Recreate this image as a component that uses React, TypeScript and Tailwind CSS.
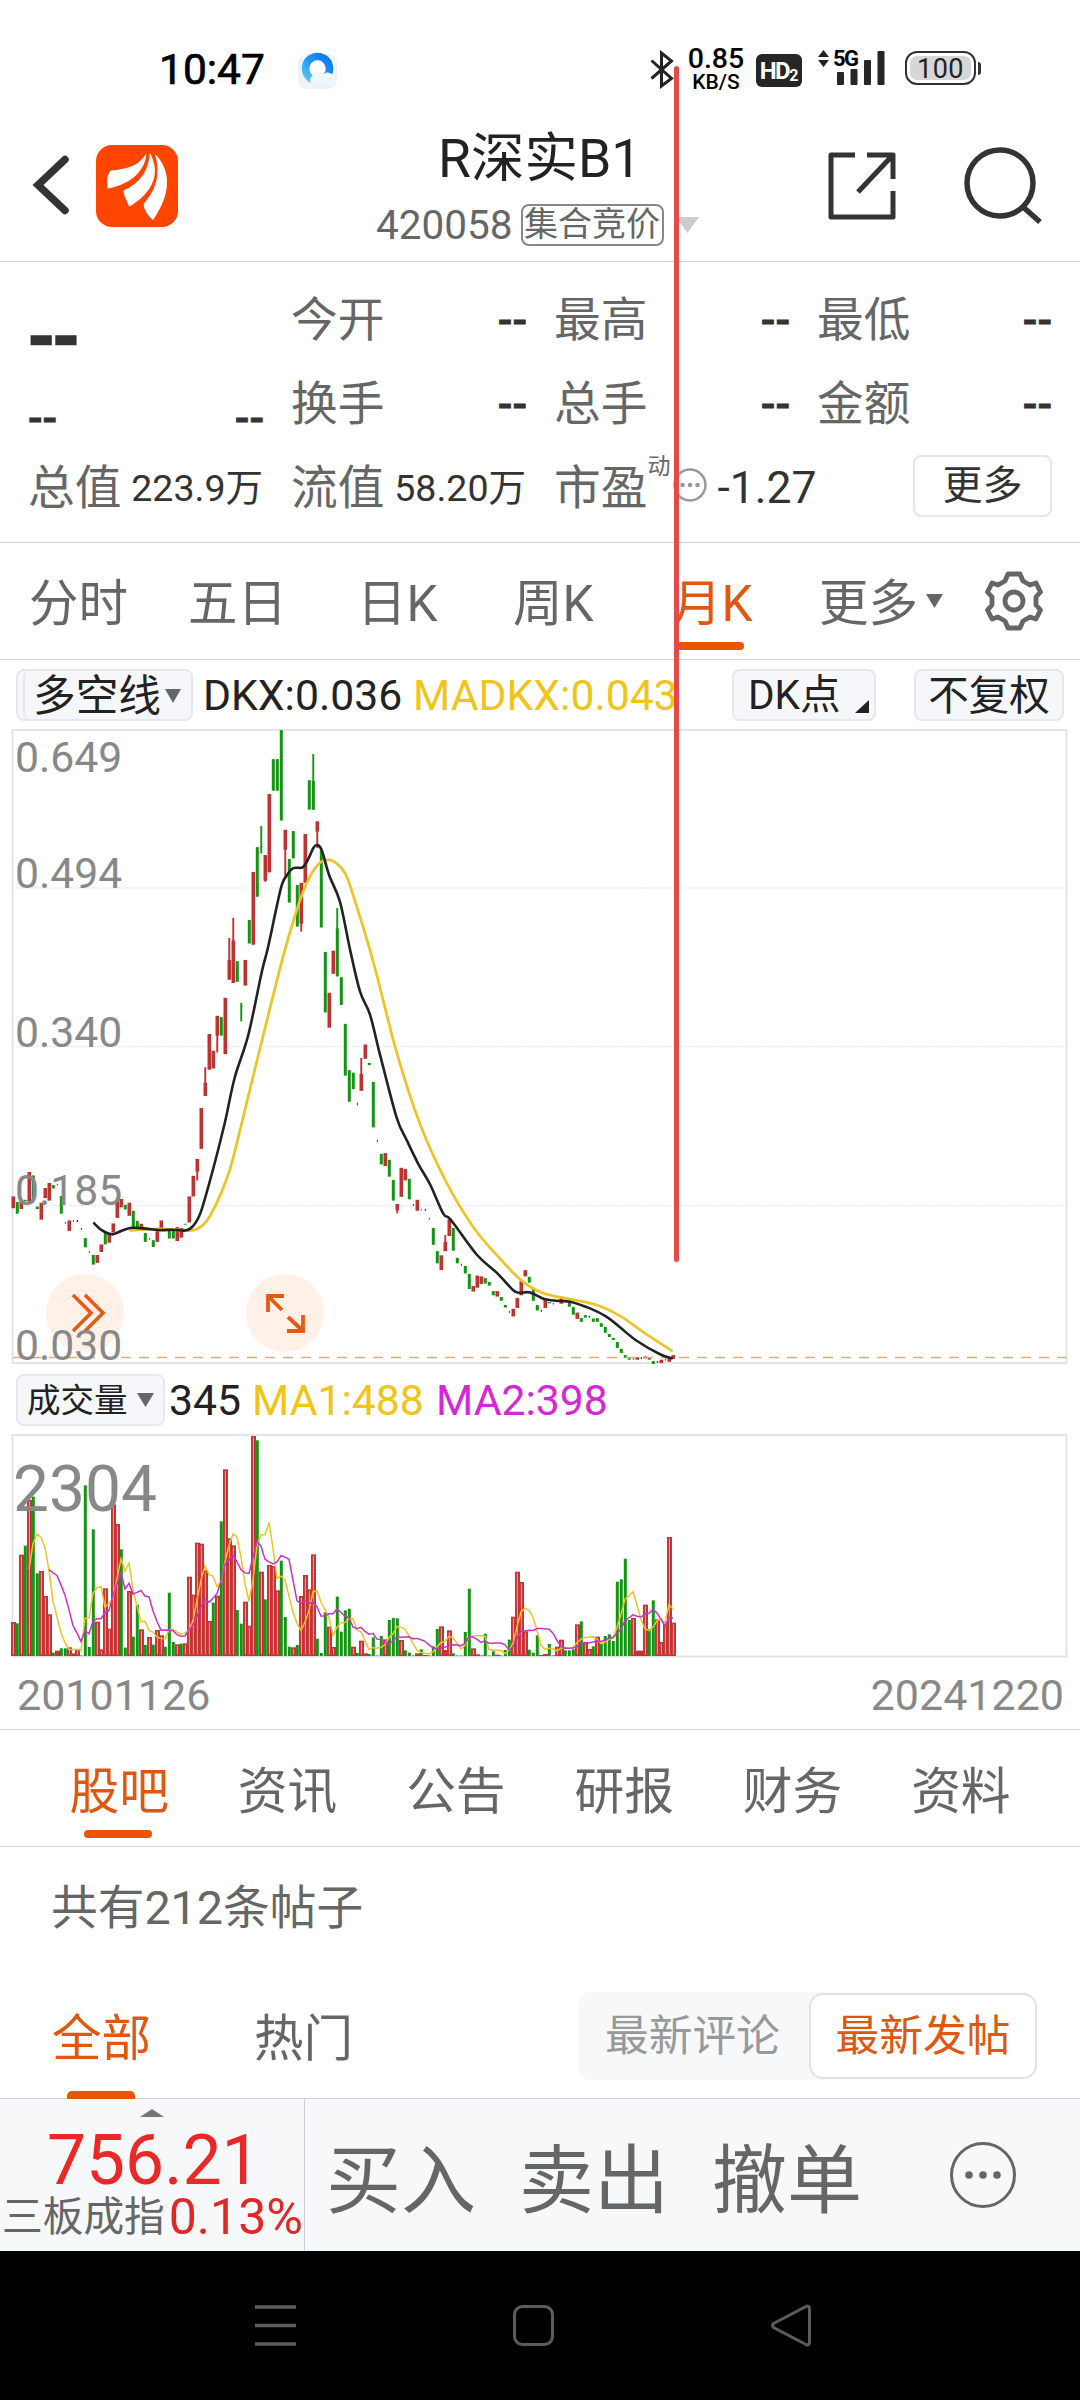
import React from "react";

type Candle = [string, number, number, number?, number?];

// Candles: colour, high, low and, where a wick is visible, body top and bottom.
const CANDLES: Candle[] = [
  ["r", 1132, 1160], ["g", 1145, 1173], ["r", 1140, 1162], ["g", 1140, 1143], ["r", 1074, 1145],
  ["g", 1082, 1140], ["g", 1156, 1162], ["r", 1147, 1187], ["r", 1112, 1136], ["r", 1100, 1142],
  ["g", 1105, 1113], ["tr", 1102, 1106], ["g", 1131, 1173], ["tg", 1193, 1197], ["r", 1189, 1214],
  ["tr", 1188, 1192], ["k", 1188, 1193], ["tg", 1207, 1212], ["g", 1231, 1253], ["tg", 1262, 1266],
  ["g", 1271, 1294], ["r", 1271, 1290], ["r", 1246, 1264], ["g", 1219, 1246], ["r", 1222, 1242],
  ["r", 1196, 1218], ["r", 1142, 1183], ["r", 1138, 1158], ["g", 1152, 1163], ["r", 1147, 1178],
  ["g", 1166, 1205], ["g", 1190, 1210], ["r", 1197, 1210], ["g", 1219, 1240], ["tr", 1231, 1235],
  ["g", 1236, 1252], ["r", 1215, 1240], ["r", 1189, 1208], ["g", 1211, 1214], ["g", 1213, 1232],
  ["g", 1213, 1232], ["r", 1205, 1238], ["r", 1207, 1230], ["g", 1197, 1199], ["r", 1132, 1194],
  ["r", 1083, 1132], ["r", 1043, 1094, 1043, 1073], ["r", 922, 1019], ["r", 825, 893, 862, 893], ["r", 746, 831],
  ["r", 786, 828], ["r", 703, 790, 703, 750], ["g", 706, 750], ["r", 660, 794], ["r", 518, 617, 570, 617],
  ["r", 470, 625, 524, 625], ["g", 573, 622], ["g", 672, 716, 680, 681], ["r", 570, 631], ["g", 475, 531],
  ["r", 361, 534], ["g", 302, 420], ["g", 252, 317, 300, 301], ["r", 321, 384, 321, 382], ["r", 176, 362],
  ["g", 93, 168], ["g", 93, 168], ["g", 24, 239], ["r", 261, 373, 261, 308], ["g", 330, 434],
  ["g", 264, 329], ["g", 392, 491], ["r", 387, 503, 387, 484], ["r", 271, 387], ["g", 143, 213],
  ["g", 81, 213, 145, 213], ["r", 241, 304, 241, 265], ["g", 310, 493], ["g", 551, 695], ["r", 648, 731],
  ["r", 548, 603], ["g", 447, 609, 495, 609], ["g", 611, 677], ["g", 722, 845], ["g", 832, 907],
  ["g", 838, 877], ["tg", 909, 916], ["r", 803, 881, 841, 881], ["r", 771, 805], ["g", 815, 820],
  ["g", 860, 968], ["tg", 997, 1003], ["g", 1031, 1056], ["r", 1029, 1060], ["g", 1045, 1085],
  ["g", 1093, 1142], ["r", 1150, 1172, 1150, 1165], ["r", 1064, 1133], ["r", 1067, 1094], ["g", 1090, 1139],
  ["tg", 1150, 1155], ["r", 1140, 1166], ["tg", 1162, 1165], ["k", 1162, 1166], ["tg", 1183, 1187],
  ["g", 1207, 1247], ["g", 1262, 1291], ["r", 1272, 1307], ["r", 1224, 1262, 1240, 1262], ["r", 1186, 1226],
  ["g", 1207, 1261], ["g", 1278, 1291], ["tg", 1292, 1297], ["g", 1297, 1315], ["g", 1316, 1352],
  ["r", 1345, 1358], ["r", 1320, 1349], ["r", 1322, 1340], ["g", 1326, 1339], ["g", 1335, 1344],
  ["g", 1357, 1367], ["r", 1357, 1370], ["g", 1371, 1380], ["g", 1390, 1396], ["tg", 1404, 1409],
  ["r", 1399, 1417], ["r", 1373, 1397], ["r", 1332, 1367], ["r", 1307, 1322], ["g", 1323, 1337],
  ["g", 1352, 1380], ["g", 1390, 1403], ["k", 1402, 1406], ["r", 1378, 1397], ["g", 1383, 1386],
  ["tg", 1385, 1389], ["r", 1380, 1383], ["r", 1370, 1387], ["r", 1378, 1384], ["g", 1380, 1394],
  ["g", 1395, 1413], ["r", 1408, 1423], ["g", 1421, 1430], ["g", 1414, 1420], ["k", 1416, 1420],
  ["g", 1422, 1430], ["g", 1421, 1430], ["g", 1433, 1442], ["g", 1442, 1456], ["g", 1459, 1466],
  ["g", 1468, 1473], ["g", 1478, 1492], ["g", 1494, 1504], ["g", 1509, 1516], ["g", 1516, 1520],
  ["tr", 1516, 1520], ["r", 1514, 1520], ["k", 1514, 1518], ["r", 1512, 1517], ["g", 1515, 1520],
  ["g", 1523, 1530], ["k", 1523, 1527], ["r", 1520, 1528], ["tr", 1518, 1522], ["r", 1518, 1525],
  ["r", 1509, 1518],
];

const DKX: [number, number][] = [
  [280, 1194], [305, 1212], [335, 1222], [355, 1217], [390, 1207], [430, 1208], [480, 1212], [520, 1211],
  [556, 1213], [578, 1203], [602, 1170], [640, 1065], [675, 955], [704, 850], [745, 748], [785, 600],
  [805, 537], [842, 402], [860, 370], [880, 352], [908, 350], [925, 330], [940, 304], [951, 297], [965, 309], [988, 370],
  [1020, 432], [1050, 545], [1080, 645], [1110, 700], [1140, 795], [1190, 945], [1220, 998], [1255, 1055],
  [1290, 1103], [1330, 1173], [1353, 1188], [1430, 1270], [1490, 1313], [1540, 1355], [1560, 1361], [1590, 1360],
  [1630, 1375], [1670, 1380], [1710, 1382], [1770, 1398], [1820, 1418], [1860, 1443], [1910, 1475],
  [1980, 1507], [2018, 1517],
];

const MADKX: [number, number][] = [
  [388, 1213], [480, 1209], [560, 1213], [590, 1210], [620, 1190], [650, 1148], [680, 1090], [705, 1023],
  [780, 780], [850, 560], [890, 452], [920, 388], [950, 347], [980, 332], [1010, 341], [1037, 367],
  [1065, 430], [1120, 575], [1190, 790], [1260, 960], [1340, 1100], [1420, 1205], [1500, 1280],
  [1565, 1332], [1630, 1362], [1710, 1376], [1790, 1390], [1860, 1416], [1940, 1460], [2018, 1500],
];

const VOLUMES: [string, number][] = (
  "r102 g98 r304 g331 r468 g478 g248 r255 r180 r125 g10 r16 g23 g23 r26 r8 r21 g0 g512 g27 g380 r103 r20 r203 r82 " +
  "r455 r396 g320 g25 r195 g58 g154 r80 g33 r57 g34 r78 r62 g28 g190 g42 r35 g37 r38 r238 r184 r340 r337 r257 r105 " +
  "g160 r181 g404 r560 r353 r332 g138 g97 r163 r91 r660 g647 r253 g170 r273 r270 r197 g286 g117 g28 r26 g33 r180 r243 r200 " +
  "r305 g52 g9 g131 r88 r27 g178 g73 g137 g142 r28 g9 r46 r8 g6 g56 g0 g60 r50 g108 g114 g113 r48 g17 g10 " +
  "g0 r8 g20 r3 g1 g29 g81 r89 r18 r77 g8 g1 g1 g72 g202 r23 r5 r1 g67 g0 g14 r4 g0 g18 g49 " +
  "r118 r253 r222 r74 g19 g10 g62 r3 r6 g36 g2 r28 r49 g17 g17 g20 r95 g104 r40 r21 g29 r58 g38 g60 g65 " +
  "g45 g223 g230 g292 g108 r114 r16 r16 r154 g81 g167 r110 r42 r95 r357 r100"
)
  .split(" ")
  .map((v) => [v[0], Number(v.slice(1))]);

const RED = "#bf3232";
const GREEN = "#159315";

const barX = (i: number) => 13.3 + 4 * i;
const priceY = (v: number) => v / 2.376 - 9;

function smooth(points: [number, number][]) {
  const p = points.map(([x, y]) => [x / 3, priceY(y)]);
  let d = `M${p[0][0]} ${p[0][1]}`;
  for (let i = 0; i < p.length - 1; i++) {
    const a = p[Math.max(i - 1, 0)];
    const b = p[i];
    const c = p[i + 1];
    const e = p[Math.min(i + 2, p.length - 1)];
    d += `C${b[0] + (c[0] - a[0]) / 6} ${b[1] + (c[1] - a[1]) / 6} ${c[0] - (e[0] - b[0]) / 6} ${c[1] - (e[1] - b[1]) / 6} ${c[0]} ${c[1]}`;
  }
  return d;
}

function average(n: number) {
  const out: string[] = [];
  for (let i = n - 1; i < VOLUMES.length; i++) {
    let sum = 0;
    for (let k = i - n + 1; k <= i; k++) sum += VOLUMES[k][1];
    out.push(`${barX(i) - 0.3},${222 - sum / n / 3}`);
  }
  return out.join(" ");
}

function Triangle({ className, up }: { className: string; up?: boolean }) {
  return (
    <svg className={className} viewBox="0 0 10 10" preserveAspectRatio="none" fill="currentColor">
      <path d={up ? "M5 0L10 10H0Z" : "M0 0H10L5 10Z"} />
    </svg>
  );
}

function StatusBar() {
  return (
    <div className="flex h-[112px] shrink-0 items-start text-black">
      <div className="ml-[159px] mt-[44px] w-[139px] text-[42.500px] leading-[52px] [-webkit-text-stroke:0.7px_black]">10:47</div>
      <svg className="mt-[50px] h-[40px] w-[40px]" viewBox="0 0 40 40">
        <defs>
          <linearGradient id="ring" x1="0" y1="1" x2="1" y2="0">
            <stop offset="0" stopColor="#5cc8ff" />
            <stop offset=".5" stopColor="#1e96f5" />
            <stop offset="1" stopColor="#0a78f0" />
          </linearGradient>
        </defs>
        <rect x="0" y="4" width="39" height="35" rx="9" fill="#eef3fa" />
        <circle cx="19.500" cy="18.500" r="12" fill="#fff" stroke="url(#ring)" strokeWidth="7.500" />
        <path d="M14 35a7 7 0 0 1 2-11a7 7 0 0 1 10 0a6 6 0 0 1 8 10z" fill="#f1f5fc" />
      </svg>
      <svg className="ml-[312px] mt-[50px] h-[39px] w-[24px]" viewBox="0 0 24 39" fill="none" stroke="#222" strokeWidth="3">
        <path d="M1.500 10.500L21.500 28.500L11.500 36V3L21.500 11L1.500 28.500" />
      </svg>
      <div className="ml-[11px] mt-[46px] w-[62px] text-center font-medium">
        <div className="h-[26px] text-[28.500px] leading-[26px]">0.85</div>
        <div className="h-[20px] text-[21px] leading-[20px]">KB/S</div>
      </div>
      <div className="ml-[9px] mt-[54px] flex h-[33px] w-[46px] items-end justify-center rounded-[6px] bg-[#262626] font-bold text-white">
        <span className="text-[24px] leading-[32px] tracking-[-1.5px]">HD</span>
        <span className="text-[16px] leading-[22px]">2</span>
      </div>
      <svg className="ml-[16px] mt-[50px] h-[17px] w-[11px]" viewBox="0 0 11 17" fill="#222">
        <path d="M5.500 0L11 7H0ZM5.500 17L0 10H11Z" />
      </svg>
      <div className="relative ml-[3px] mt-[51px] h-[35px] w-[53px]">
        <svg className="h-[35px] w-[53px]" viewBox="0 0 53 35" fill="#262626">
          <rect x="5" y="21" width="7" height="13" rx="1" />
          <rect x="18.500" y="18" width="7" height="16" rx="1" />
          <rect x="32" y="9" width="7" height="25" rx="1" />
          <rect x="45.500" y="0" width="7" height="34" rx="1" />
        </svg>
        <span className="absolute left-[1px] top-[-3px] text-[22px] font-bold leading-[22px] tracking-[-1.5px]">5G</span>
      </div>
      <div className="ml-[20px] mt-[51px] flex h-[34px] w-[71px] rounded-[12px] border-2 border-[#333] bg-white p-[3px]">
        <div className="flex-1 rounded-[7px] bg-[#d6d6d6] text-center text-[27px] leading-[26px] tracking-[0.5px] text-[#222]">100</div>
      </div>
      <div className="ml-[2px] mt-[62px] h-[13px] w-[3px] rounded-r bg-[#333]" />
    </div>
  );
}

function Header() {
  return (
    <div className="flex h-[150px] shrink-0 border-b border-[#d0d0d0]">
      <svg className="ml-[31px] mt-[40px] h-[66px] w-[40px]" viewBox="0 0 40 66" fill="none" stroke="#333" strokeWidth="7.500" strokeLinecap="round">
        <path d="M34 7.500L7 33L34 58.500" />
      </svg>
      <svg className="ml-[25px] mt-[33px] h-[82px] w-[82px]" viewBox="288 74 246 246">
        <rect x="288" y="74" width="246" height="246" rx="48" fill="#ff4500" />
        <path d="M323 205C320 182 322 162 331 151C380 147 418 137 439 99C437 150 394 192 323 205Z" fill="#fff" />
        <path d="M388 259C380 240 370 224 371 210C420 188 447 152 449 97C482 154 464 213 388 259Z" fill="#fff" />
        <path d="M459 299C442 284 431 267 431 250C468 210 484 158 464 100C514 148 515 220 459 299Z" fill="#fff" />
      </svg>
      <div className="ml-[198px] flex w-[325px] flex-col">
        <div className="mt-[15px] h-[64px] pl-[62px] text-[53.500px] leading-[64px] text-[#222]">R深实B1</div>
        <div className="mt-[10px] flex h-[48px] items-center text-[#666]">
          <span className="text-[40.500px] leading-[46px]">420058</span>
          <span className="ml-[8px] h-[42px] w-[143px] rounded-[8px] border-2 border-[#888] text-center text-[34px] leading-[37px]">集合竞价</span>
          <Triangle className="ml-[12px] h-[16px] w-[23px] text-[#ccc]" />
        </div>
      </div>
      <svg className="ml-[125px] mt-[37px] h-[74px] w-[72px]" viewBox="0 0 72 74" fill="none" stroke="#333" strokeWidth="5" strokeLinejoin="round">
        <path d="M29 6H5V68H67V42M41 6H67V30M32 43L66 7" />
      </svg>
      <svg className="ml-[65px] mt-[33px] h-[82px] w-[82px]" viewBox="0 0 82 82" fill="none" stroke="#333" strokeWidth="5.500">
        <circle cx="37" cy="38" r="33" />
        <path d="M59 61L77 77" />
      </svg>
    </div>
  );
}

function Quote({ label, value, small }: { label: string; value: string; small?: boolean }) {
  return (
    <div className={small ? "flex h-[84px] items-center justify-between pr-[28px]" : "flex h-[84px] items-center justify-between pr-[27px]"}>
      <span className="text-[46.700px] text-[#666]">{label}</span>
      <span className={small ? "text-[37.500px] text-[#333]" : "text-[43px] font-medium text-[#333] [-webkit-text-stroke:0.8px_#333]"}>{value}</span>
    </div>
  );
}

function QuotePanel() {
  return (
    <div className="h-[281px] shrink-0 border-b border-[#d0d0d0] pl-[28px] pt-[16px] leading-[60px]">
      <div className="grid grid-cols-[263px_263px_263px_262px]">
        <div className="h-[84px] pt-[30px] text-[68px] font-bold leading-[60px] tracking-[-2px] text-[#333] [-webkit-text-stroke:2.5px_#333]">--</div>
        <Quote label="今开" value="--" />
        <Quote label="最高" value="--" />
        <Quote label="最低" value="--" />
        <div className="flex h-[84px] items-center justify-between pr-[27px] pt-[27px] text-[43px] font-medium text-[#333] [-webkit-text-stroke:0.8px_#333]">
          <span>--</span>
          <span>--</span>
        </div>
        <Quote label="换手" value="--" />
        <Quote label="总手" value="--" />
        <Quote label="金额" value="--" />
        <Quote label="总值" value="223.9万" small />
        <Quote label="流值" value="58.20万" small />
        <div className="flex h-[84px] items-center">
          <span className="text-[46.700px] text-[#666]">市盈</span>
          <span className="mb-[43px] text-[23px] leading-[30px] text-[#666]">动</span>
          <svg className="-mt-[6px] ml-[3px] h-[34px] w-[34px] shrink-0" viewBox="0 0 34 34">
            <circle cx="17" cy="17" r="15.500" fill="none" stroke="#999" strokeWidth="2.500" />
            <g fill="#999">
              <circle cx="9.500" cy="17" r="2.300" />
              <circle cx="17" cy="17" r="2.300" />
              <circle cx="24.500" cy="17" r="2.300" />
            </g>
          </svg>
          <span className="ml-[10px] whitespace-nowrap text-[44.500px] text-[#333]">-1.27</span>
        </div>
        <div className="flex h-[84px] items-center justify-end pr-[27px]">
          <div className="-mt-[4px] h-[62px] w-[139px] rounded-[8px] border-2 border-[#e6e6e6] text-center text-[40px] leading-[58px] text-[#333]">更多</div>
        </div>
      </div>
    </div>
  );
}

function PeriodTabs() {
  return (
    <div className="flex h-[117px] shrink-0 border-b border-[#d0d0d0] pl-[29px] text-[49.500px] leading-[123px] text-[#666]">
      <div className="w-[159px]">分时</div>
      <div className="w-[169px]">五日</div>
      <div className="w-[156px]">日K</div>
      <div className="w-[160px]">周K</div>
      <div className="relative w-[146px] text-[#e0570f]">
        <span className="-ml-[1px]">月K</span>
        <div className="absolute left-[3px] top-[99px] h-[8px] w-[68px] rounded-full bg-[#e95504]" />
      </div>
      <div className="w-[107px] whitespace-nowrap">更多</div>
      <Triangle className="mt-[51px] h-[14px] w-[17px]" />
      <svg className="ml-[40px] mt-[27px] h-[62px] w-[62px]" viewBox="-31 -31 62 62" fill="none" stroke="#666" strokeWidth="4.800" strokeLinejoin="round">
        <path d="M-6 -27H6L9 -20L16 -16L22 -18L26.500 -9L22 -4V4L26.500 9L22 18L16 16L9 20L6 27H-6L-9 20L-16 16L-22 18L-26.500 9L-22 4V-4L-26.500 -9L-22 -18L-16 -16L-9 -20Z" />
        <circle r="9" />
      </svg>
    </div>
  );
}

function IndicatorBar() {
  return (
    <div className="flex h-[69px] shrink-0 items-start pt-[9px] text-[42.700px] leading-[53px] text-[#222]">
      <div className="ml-[16px] h-[52px] w-[177px] rounded-[8px] border-2 border-[#e6e8ec] bg-[#f6f7fa]">
        <div className="-mt-[1px] ml-[5px] flex h-[50px] items-center rounded-[7px] border-l-2 border-[#e6e8ec] pl-[8px] pt-[3px]">
          多空线
          <Triangle className="-mt-[2px] ml-[4px] h-[14px] w-[16px] text-[#666]" />
        </div>
      </div>
      <div className="ml-[10px] w-[210px]">DKX:0.036</div>
      <div className="w-[262px] text-[#f0c419]">MADKX:0.043</div>
      <div className="relative ml-[57px] h-[52px] w-[144px] rounded-[8px] border-2 border-[#e6e8ec] bg-[#f6f7fa] pl-[14px] text-[40.500px] leading-[49px]">
        DK点
        <svg className="absolute bottom-[6px] right-[5px] h-[13px] w-[14px]" viewBox="0 0 14 13" fill="#222">
          <path d="M14 0V13H0Z" />
        </svg>
      </div>
      <div className="ml-[38px] h-[52px] w-[150px] rounded-[8px] border-2 border-[#e6e8ec] bg-[#f6f7fa] text-center text-[40.500px] leading-[50px]">不复权</div>
    </div>
  );
}

function PriceChart() {
  return (
    <div className="relative h-[635px] shrink-0">
      <svg className="block h-[635px] w-[1080px]" viewBox="0 0 1080 635" fill="none">
        <rect x="12.500" y="1" width="1054" height="633" stroke="#e0e0e0" strokeWidth="1.700" />
        <g stroke="#ececec" strokeWidth="1.500" strokeDasharray="2 1">
          <path d="M13 159H1066M13 317.500H1066M13 476.500H1066" />
        </g>
        {CANDLES.map(([c, top, bottom, bt, bb], i) => {
          const x = barX(i);
          const color = c.endsWith("r") ? RED : c.endsWith("g") ? GREEN : "#222";
          const tiny = c.length > 1 || c === "k";
          const y = priceY(top);
          const h = priceY(bottom) - y;
          const w = c === "r" ? 3.6 : 3;
          if (tiny) return <rect key={i} x={x - 0.5} y={y} width={1.2} height={h} fill={color} />;
          if (bt === undefined || bb === undefined) return <rect key={i} x={x - w / 2} y={y} width={w} height={h} fill={color} />;
          return (
            <g key={i} fill={color}>
              <rect x={x - 1} y={y} width={1.9} height={h} />
              <rect x={x - w / 2} y={priceY(bt)} width={w} height={priceY(bb) - priceY(bt)} />
            </g>
          );
        })}
        <path d="M13 628.500H1066" stroke="#d9ab87" strokeWidth="1.500" strokeDasharray="10 8" />
        <path d={smooth(MADKX)} stroke="#ecc425" strokeWidth="2.700" />
        <path d={smooth(DKX)} stroke="#222" strokeWidth="2.600" />
      </svg>
      <svg className="absolute left-[46px] top-[545px] h-[78px] w-[78px]" viewBox="0 0 78 78" fill="none" stroke="#e65a14" strokeWidth="3.500">
        <circle cx="39" cy="39" r="39" fill="#ff8c50" fillOpacity="0.13" stroke="none" />
        <path d="M27 21L45 39L27 57M39 21L57 39L39 57" />
      </svg>
      <svg className="absolute left-[246px] top-[545px] h-[78px] w-[78px]" viewBox="0 0 78 78" fill="none" stroke="#e65a14" strokeWidth="3.800">
        <circle cx="39" cy="39" r="39" fill="#ff8c50" fillOpacity="0.13" stroke="none" />
        <path d="M22 38V22H38M22 22L36 36M42 43L57 57M41 57H57V41" />
      </svg>
      <div className="absolute left-[15px] top-[3px] text-[42.700px] leading-[51px] text-[#888]">0.649</div>
      <div className="absolute left-[15px] top-[119px] text-[42.700px] leading-[51px] text-[#888]">0.494</div>
      <div className="absolute left-[15px] top-[278px] text-[42.700px] leading-[51px] text-[#888]">0.340</div>
      <div className="absolute left-[15px] top-[436px] text-[42.700px] leading-[51px] text-[#888]">0.185</div>
      <div className="absolute left-[15px] top-[591px] text-[42.700px] leading-[51px] text-[#888]">0.030</div>
    </div>
  );
}

function VolumeSection() {
  return (
    <>
      <div className="flex h-[70px] shrink-0 items-start pt-[10px] text-[42.700px] leading-[52px]">
        <div className="ml-[16px] flex h-[52px] w-[149px] items-center rounded-[8px] border-2 border-[#e6e8ec] bg-[#f6f7fa] pl-[9px] text-[33.500px] text-[#222]">
          <span className="pt-[2px]">成交量</span>
          <Triangle className="ml-[9px] h-[14px] w-[17px] text-[#666]" />
        </div>
        <div className="ml-[4px] w-[83px] text-[#222]">345</div>
        <div className="w-[184px] text-[#f0c419]">MA1:488</div>
        <div className="text-[#d428d4]">MA2:398</div>
      </div>
      <div className="relative h-[224px] shrink-0">
        <svg className="block h-[224px] w-[1080px]" viewBox="0 0 1080 224" fill="none">
          <rect x="12.500" y="1" width="1054" height="221.500" stroke="#e0e0e0" strokeWidth="1.700" />
          {VOLUMES.map(([c, v], i) => {
            const h = Math.max(v / 3, 0.5);
            const x = barX(i);
            return c === "r" ? (
              <g key={i}>
                <rect x={x - 2.3} y={222 - h} width={5} height={h} fill="#c83232" />
                {h > 6 && <rect x={x - 0.4} y={223.5 - h} width={1} height={h - 3} fill="#f0a8a8" />}
              </g>
            ) : (
              <rect key={i} x={x - 1.5} y={222 - h} width={3} height={h} fill={GREEN} />
            );
          })}
          <polyline points={average(5)} stroke="#ecc425" strokeWidth="1.500" />
          <polyline points={average(10)} stroke="#c832c8" strokeWidth="1.500" />
        </svg>
        <div className="absolute left-[13px] top-[21px] text-[64px] leading-[70px] text-[#888]">2304</div>
      </div>
      <div className="flex h-[72px] shrink-0 items-center justify-between border-b border-[#d0d4d6] pl-[17px] pr-[16px] pt-[2px] text-[43px] leading-[50px] text-[#888]">
        <span>20101126</span>
        <span>20241220</span>
      </div>
    </>
  );
}

function InfoTabs() {
  const tabs = ["股吧", "资讯", "公告", "研报", "财务", "资料"];
  return (
    <div className="grid h-[117px] shrink-0 grid-cols-6 border-b border-[#d0d4d6] pl-[35px] pr-[35px] text-center text-[49.700px] leading-[125px] text-[#666]">
      {tabs.map((t, i) => (
        <div key={t} className={i === 0 ? "relative text-[#e0570f]" : ""}>
          {t}
          {i === 0 && <div className="absolute left-[49px] top-[100px] h-[8px] w-[68px] rounded-full bg-[#e95504]" />}
        </div>
      ))}
    </div>
  );
}

function Posts() {
  return (
    <div className="flex h-[251px] shrink-0 flex-col">
      <div className="h-[120px] pl-[51px] text-[46.700px] leading-[123px] text-[#666]">共有212条帖子</div>
      <div className="flex h-[131px] items-start pl-[52px] text-[49.500px] leading-[145px]">
        <div className="relative w-[202px] text-[#e0570f]">
          全部
          <div className="absolute left-[15px] top-[124px] h-[8px] w-[68px] rounded-t-[5px] bg-[#e95504]" />
        </div>
        <div className="w-[324px] text-[#666]">热门</div>
        <div className="mt-[25px] flex h-[88px] w-[459px] rounded-[14px] bg-[#f7f8fa] text-center text-[43.700px] leading-[89px]">
          <div className="w-[231px] pr-[2px] text-[#999]">最新评论</div>
          <div className="mt-[1px] h-[86px] w-[228px] rounded-[14px] border-2 border-[#e3e3e3] bg-white text-[#e0570f]">
            <div className="-mt-[3px]">最新发帖</div>
          </div>
        </div>
      </div>
    </div>
  );
}

function TradeBar() {
  return (
    <div className="flex h-[153px] shrink-0 border-t border-[#ccd1d7] bg-[#f7f8fa] text-[#666]">
      <div className="flex w-[305px] flex-col border-r border-[#ccd1d7]">
        <Triangle up className="ml-[140px] mt-[10px] h-[8px] w-[24px] shrink-0 text-[#777]" />
        <div className="h-[74px] shrink-0 pl-[47px] text-[69.500px] leading-[87px] text-[#eb2828]">756.21</div>
        <div className="flex h-[50px] items-center whitespace-nowrap pl-[2px]">
          <span className="pt-[2px] text-[40.700px] leading-[50px]">三板成指</span>
          <span className="ml-[4px] pt-[2px] text-[50px] leading-[50px] text-[#e02828]">0.13%</span>
        </div>
      </div>
      <div className="flex text-[75px] leading-[164px]">
        <div className="ml-[21px] w-[193px]">买入</div>
        <div className="w-[193px]">卖出</div>
        <div className="w-[237px]">撤单</div>
      </div>
      <svg className="mt-[42px] h-[68px] w-[68px]" viewBox="-34 -34 68 68" fill="#666">
        <circle r="31.500" fill="none" stroke="#666" strokeWidth="3" />
        <circle cx="-14" r="3.800" />
        <circle r="3.800" />
        <circle cx="14" r="3.800" />
      </svg>
    </div>
  );
}

function NavBar() {
  return (
    <div className="flex h-[149px] shrink-0 bg-black pt-[52px]">
      <svg className="ml-[253px] h-[45px] w-[45px]" viewBox="0 0 45 45" stroke="#5c5c5c" strokeWidth="3.500">
        <path d="M2 4H43M2 22.500H43M2 41H43" />
      </svg>
      <svg className="ml-[213px] h-[45px] w-[45px]" viewBox="0 0 45 45" fill="none" stroke="#5c5c5c" strokeWidth="3">
        <rect x="3.500" y="3.500" width="38" height="38" rx="8" />
      </svg>
      <svg className="ml-[213px] h-[45px] w-[45px]" viewBox="0 0 45 45" fill="none" stroke="#5c5c5c" strokeWidth="3" strokeLinejoin="round">
        <path d="M4.500 20.500Q2.500 22.500 4.500 24.500L37 41.500Q40.500 43 40.500 39V6Q40.500 2 37 3.500Z" />
      </svg>
    </div>
  );
}

export default function App() {
  return (
    <div className="relative flex h-[2400px] w-[1080px] flex-col overflow-hidden bg-white font-['Roboto','Noto_Sans_CJK_SC',sans-serif]">
      <StatusBar />
      <Header />
      <QuotePanel />
      <PeriodTabs />
      <IndicatorBar />
      <PriceChart />
      <VolumeSection />
      <InfoTabs />
      <Posts />
      <TradeBar />
      <NavBar />
      <div className="absolute left-[674px] top-[66px] h-[1196px] w-[4.500px] rounded-full bg-[#e94848]" />
    </div>
  );
}
